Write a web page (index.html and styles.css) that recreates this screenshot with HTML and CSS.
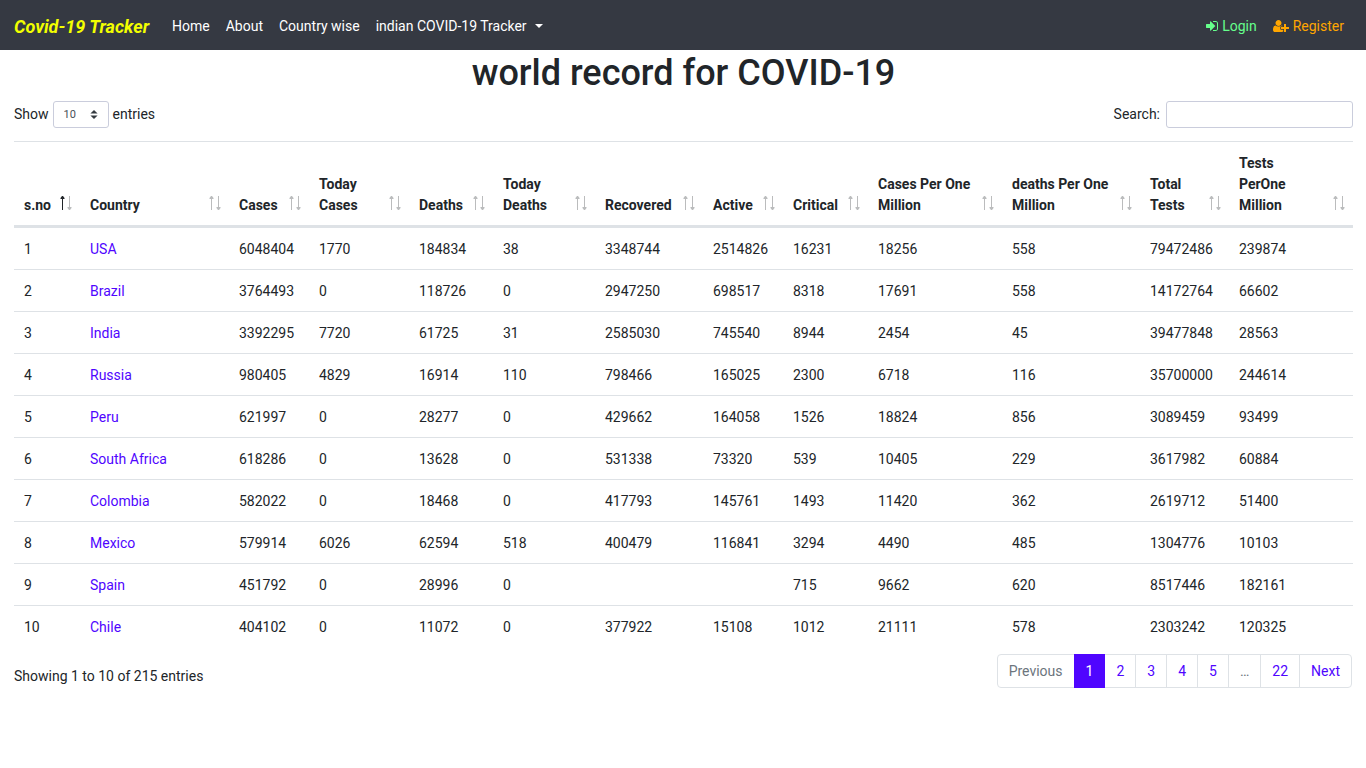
FILE: index.html
```html
<!DOCTYPE html>
<html lang="en">
<head>
<meta charset="utf-8">
<meta name="viewport" content="width=device-width, initial-scale=1">
<title>Covid-19 Tracker</title>
<link rel="stylesheet" href="styles.css">
</head>
<body>
<nav class="navbar">
  <a class="brand" href="#">Covid-19 Tracker</a>
  <ul class="nav-list">
    <li><a class="nav-link" href="#">Home</a></li>
    <li><a class="nav-link" href="#">About</a></li>
    <li><a class="nav-link" href="#">Country wise</a></li>
    <li><a class="nav-link dropdown" href="#">indian COVID-19 Tracker</a></li>
  </ul>
  <ul class="nav-list nav-account">
    <li><a class="nav-link login" href="#"><svg class="icon icon-login" viewBox="0 0 1536 1792" aria-hidden="true"><path d="M1184 896q0 26-19 45l-544 544q-19 19-45 19t-45-19-19-45v-288h-448q-26 0-45-19t-19-45v-384q0-26 19-45t45-19h448v-288q0-26 19-45t45-19 45 19l544 544q19 19 19 45zm352-352v704q0 119-84.500 203.500t-203.500 84.500h-320q-13 0-22.500-9.500t-9.500-22.500q0-4-1-20t-.500-26.500 3-23.500 10-19.500 20.500-6.500h320q66 0 113-47t47-113v-704q0-66-47-113t-113-47h-312l-11.500-1-11.500-3-8-5.500-7-9-2-13.500q0-4-1-20t-.500-26.500 3-23.500 10-19.500 20.500-6.500h320q119 0 203.500 84.500t84.500 203.500z"/></svg>Login</a></li>
    <li><a class="nav-link register" href="#"><svg class="icon icon-register" viewBox="0 0 2048 1792" aria-hidden="true"><path d="M704 896q-159 0-271.500-112.500t-112.500-271.500 112.500-271.500 271.500-112.500 271.500 112.500 112.500 271.500-112.500 271.500-271.500 112.500zm960 128h352q13 0 22.500 9.500t9.500 22.500v192q0 13-9.500 22.500t-22.500 9.500h-352v352q0 13-9.500 22.500t-22.500 9.500h-192q-13 0-22.500-9.500t-9.500-22.500v-352h-352q-13 0-22.500-9.500t-9.500-22.500v-192q0-13 9.500-22.500t22.500-9.500h352v-352q0-13 9.500-22.500t22.500-9.500h192q13 0 22.500 9.500t9.500 22.500v352zm-736 224q0 52 38 90t90 38h256v238q-68 50-171 50h-874q-121 0-194-69t-73-190q0-53 3.500-103.500t14-109 26.500-108.500 43-97.500 62-81 85.500-53.500 111.500-20q19 0 39 17 79 61 154.500 91.500t164.500 30.500 164.500-30.500 154.500-91.500q20-17 39-17 132 0 217 96h-223q-52 0-90 38t-38 90v192z"/></svg>Register</a></li>
  </ul>
</nav>
<main class="page">
  <h1 class="title">world record for COVID-19</h1>
  <div class="controls">
    <label class="length">Show
      <select class="length-select"><option>10</option><option>25</option><option>50</option><option>100</option></select>
      entries</label>
    <label class="filter">Search:<input class="filter-input" type="search"></label>
  </div>
  <table class="records">
    <colgroup>
      <col class="c-sno"><col class="c-country"><col class="c-cases"><col class="c-today-cases"><col class="c-deaths"><col class="c-today-deaths"><col class="c-recovered"><col class="c-active"><col class="c-critical"><col class="c-cpm"><col class="c-dpm"><col class="c-tests"><col class="c-tpm">
    </colgroup>
    <thead>
      <tr>
        <th aria-sort="ascending"><button class="sort asc">s.no</button></th>
        <th><button class="sort">Country</button></th>
        <th><button class="sort">Cases</button></th>
        <th><button class="sort">Today Cases</button></th>
        <th><button class="sort">Deaths</button></th>
        <th><button class="sort">Today Deaths</button></th>
        <th><button class="sort">Recovered</button></th>
        <th><button class="sort">Active</button></th>
        <th><button class="sort">Critical</button></th>
        <th><button class="sort">Cases Per One Million</button></th>
        <th><button class="sort">deaths Per One Million</button></th>
        <th><button class="sort">Total Tests</button></th>
        <th><button class="sort">Tests<br>PerOne<br>Million</button></th>
      </tr>
    </thead>
    <tbody>
      <tr><td>1</td><td><a href="#">USA</a></td><td>6048404</td><td>1770</td><td>184834</td><td>38</td><td>3348744</td><td>2514826</td><td>16231</td><td>18256</td><td>558</td><td>79472486</td><td>239874</td></tr>
      <tr><td>2</td><td><a href="#">Brazil</a></td><td>3764493</td><td>0</td><td>118726</td><td>0</td><td>2947250</td><td>698517</td><td>8318</td><td>17691</td><td>558</td><td>14172764</td><td>66602</td></tr>
      <tr><td>3</td><td><a href="#">India</a></td><td>3392295</td><td>7720</td><td>61725</td><td>31</td><td>2585030</td><td>745540</td><td>8944</td><td>2454</td><td>45</td><td>39477848</td><td>28563</td></tr>
      <tr><td>4</td><td><a href="#">Russia</a></td><td>980405</td><td>4829</td><td>16914</td><td>110</td><td>798466</td><td>165025</td><td>2300</td><td>6718</td><td>116</td><td>35700000</td><td>244614</td></tr>
      <tr><td>5</td><td><a href="#">Peru</a></td><td>621997</td><td>0</td><td>28277</td><td>0</td><td>429662</td><td>164058</td><td>1526</td><td>18824</td><td>856</td><td>3089459</td><td>93499</td></tr>
      <tr><td>6</td><td><a href="#">South Africa</a></td><td>618286</td><td>0</td><td>13628</td><td>0</td><td>531338</td><td>73320</td><td>539</td><td>10405</td><td>229</td><td>3617982</td><td>60884</td></tr>
      <tr><td>7</td><td><a href="#">Colombia</a></td><td>582022</td><td>0</td><td>18468</td><td>0</td><td>417793</td><td>145761</td><td>1493</td><td>11420</td><td>362</td><td>2619712</td><td>51400</td></tr>
      <tr><td>8</td><td><a href="#">Mexico</a></td><td>579914</td><td>6026</td><td>62594</td><td>518</td><td>400479</td><td>116841</td><td>3294</td><td>4490</td><td>485</td><td>1304776</td><td>10103</td></tr>
      <tr><td>9</td><td><a href="#">Spain</a></td><td>451792</td><td>0</td><td>28996</td><td>0</td><td></td><td></td><td>715</td><td>9662</td><td>620</td><td>8517446</td><td>182161</td></tr>
      <tr><td>10</td><td><a href="#">Chile</a></td><td>404102</td><td>0</td><td>11072</td><td>0</td><td>377922</td><td>15108</td><td>1012</td><td>21111</td><td>578</td><td>2303242</td><td>120325</td></tr>
    </tbody>
  </table>
  <div class="footer">
    <div class="info">Showing 1 to 10 of 215 entries</div>
    <ul class="pagination">
      <li><a class="page-link muted" href="#">Previous</a></li>
      <li><a class="page-link active" href="#">1</a></li>
      <li><a class="page-link" href="#">2</a></li>
      <li><a class="page-link" href="#">3</a></li>
      <li><a class="page-link" href="#">4</a></li>
      <li><a class="page-link" href="#">5</a></li>
      <li><a class="page-link muted" href="#">…</a></li>
      <li><a class="page-link" href="#">22</a></li>
      <li><a class="page-link" href="#">Next</a></li>
    </ul>
  </div>
</main>
</body>
</html>
```
FILE: styles.css
```css
*, *::before, *::after { box-sizing: border-box; }

body {
  margin: 0;
  background: #fff;
  color: #212529;
  font-family: Roboto, sans-serif;
  font-size: 14px;
  line-height: 21px;
}

a { color: #4f05ff; text-decoration: none; }
ul { list-style: none; margin: 0; padding: 0; }

/* Navigation bar */
.navbar {
  display: flex;
  align-items: center;
  min-height: 50px;
  padding: 2px 14px 0;
  background: #353942;
}
.brand {
  margin-right: 15px;
  color: #f2ff00;
  font-size: 18px;
  font-weight: 700;
  font-style: italic;
}
.nav-list { display: flex; }
.nav-account { margin-left: auto; }
.nav-link { display: flex; align-items: center; padding: 7px 8px; color: #fff; }
.login { color: #66ff8c; }
.register { color: #ffa600; }
.icon { height: 14px; margin-right: 4px; fill: currentColor; }
.icon-login { width: 12px; }
.icon-register { width: 16px; }
.dropdown::after {
  content: "";
  margin-left: 8px;
  border: 4px solid transparent;
  border-top-color: currentColor;
  border-bottom: 0;
}

/* Page */
.page { padding: 0 13px 0 14px; }
.title {
  margin: 0 0 7px;
  padding-top: 2px;
  font-size: 36px;
  font-weight: 500;
  line-height: 42px;
  text-align: center;
}
.controls {
  display: flex;
  justify-content: space-between;
  margin-bottom: 13px;
}
.length, .filter { display: flex; align-items: center; }
.length { gap: 4px; }
.filter { gap: 6px; }
.length-select, .filter-input {
  height: 27px;
  border: 1px solid #cacddc;
  border-radius: 3px;
  background: #fff;
  color: #495057;
  font-family: inherit;
  font-size: 11px;
}
.length-select {
  width: 56px;
  padding: 0 10px;
  appearance: none;
  background: #fff url("data:image/svg+xml,%3Csvg xmlns='http://www.w3.org/2000/svg' viewBox='0 0 4 5'%3E%3Cpath fill='%23343a40' d='M2 0L0 2h4zm0 5L0 3h4z'/%3E%3C/svg%3E") no-repeat right 10px center / 8px 9px;
}
.filter-input { width: 187px; padding: 0 7px; appearance: none; }

/* Records table */
.records {
  width: 100%;
  table-layout: fixed;
  border-collapse: separate;
  border-spacing: 0;
}
.c-sno { width: 66px; }
.c-country { width: 149px; }
.c-cases { width: 80px; }
.c-today-cases { width: 100px; }
.c-deaths { width: 84px; }
.c-today-deaths { width: 102px; }
.c-recovered { width: 108px; }
.c-active { width: 80px; }
.c-critical { width: 85px; }
.c-cpm { width: 134px; }
.c-dpm { width: 138px; }
.c-tests { width: 89px; }
.c-tpm { width: 124px; }

.records th, .records td {
  padding: 11px 0 9px 10px;
  text-align: left;
  border-top: 1px solid #dee2e6;
}
.records th {
  position: relative;
  vertical-align: bottom;
  border-bottom: 3px solid #dee2e6;
}
.records tbody tr:first-child td { border-top: 0; }
.sort {
  display: block;
  width: 100%;
  padding: 0 26px 0 0;
  border: 0;
  background: none;
  color: inherit;
  font: inherit;
  font-weight: 700;
  text-align: left;
}
.sort::before, .sort::after {
  content: "";
  position: absolute;
  bottom: 15px;
  width: 5px;
  height: 14px;
  opacity: 0.3;
}
.sort::before {
  right: 15px;
  background: url("data:image/svg+xml,%3Csvg xmlns='http://www.w3.org/2000/svg' viewBox='0 0 5 14'%3E%3Cpath fill='%23212529' d='M2 14V3H.5V2L2 0h1l1.500 2v1H3v11z'/%3E%3C/svg%3E") no-repeat;
}
.sort::after {
  right: 8px;
  background: url("data:image/svg+xml,%3Csvg xmlns='http://www.w3.org/2000/svg' viewBox='0 0 5 14'%3E%3Cpath fill='%23212529' d='M2 0v11H.5v1L2 14h1l1.500-2v-1H3V0z'/%3E%3C/svg%3E") no-repeat;
}
.sort.asc::before { opacity: 1; }

/* Footer */
.footer {
  display: flex;
  justify-content: space-between;
  align-items: flex-start;
  padding: 7px 1px 0 0;
}
.info { padding-top: 12px; }
.pagination { display: flex; }
.page-link {
  display: block;
  margin-left: -1px;
  padding: 6px 11px;
  border: 1px solid #dee2e6;
  background: #fff;
  line-height: 20px;
}
.pagination li:first-child .page-link { border-radius: 4px 0 0 4px; }
.pagination li:last-child .page-link { border-radius: 0 4px 4px 0; }
.page-link.muted { color: #6c757d; }
.page-link.active {
  position: relative;
  border-color: #4f05ff;
  background: #4f05ff;
  color: #fff;
}
```
